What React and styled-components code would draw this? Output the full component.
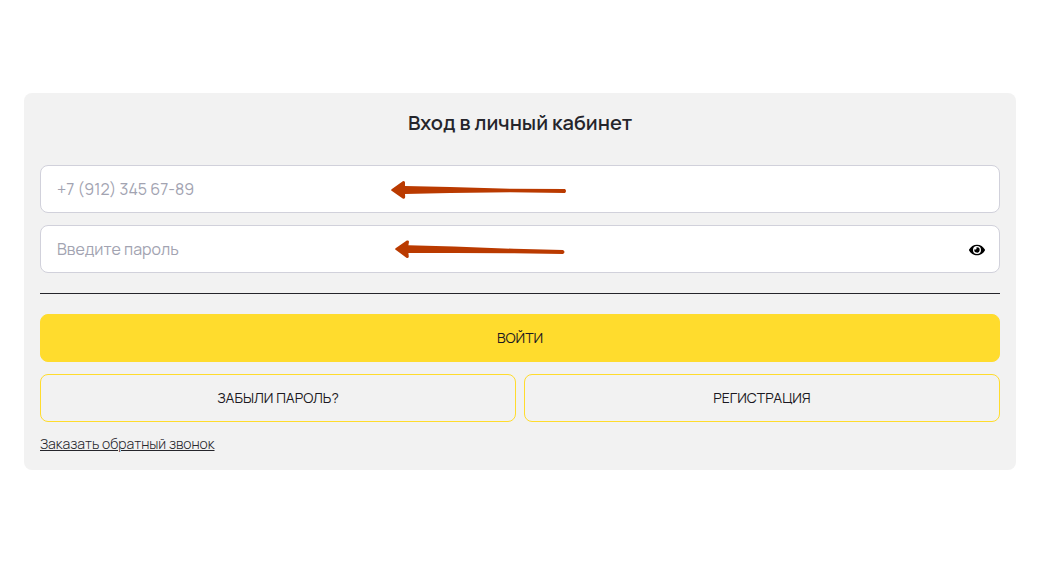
import React, { useState } from "react";
import styled, { createGlobalStyle } from "styled-components";
import { FaEye } from "react-icons/fa";

const GlobalStyle = createGlobalStyle`
  *, *::before, *::after { box-sizing: border-box; }
  body {
    margin: 0;
    background: #fff;
    color: #25252b;
    font-family: Manrope, Inter, "Open Sans", sans-serif;
  }
`;

const Page = styled.main`
  padding: 93px 25px 24px 24px;
`;

const Panel = styled.form`
  padding: 16px;
  border-radius: 8px;
  background: #f2f2f2;
`;

const Title = styled.h1`
  margin: 0 0 28px;
  font-size: 20px;
  line-height: 28px;
  font-weight: 600;
  text-align: center;
`;

const Fields = styled.div`
  display: flex;
  flex-direction: column;
  gap: 12px;
`;

const Field = styled.div`
  position: relative;
  display: flex;
  align-items: center;
  height: 48px;
  padding: 0 14px 0 16px;
  border: 1px solid #d1d1db;
  border-radius: 8px;
  background: #fff;
`;

const Input = styled.input`
  flex: 1;
  min-width: 0;
  height: 100%;
  padding: 0;
  border: 0;
  outline: 0;
  background: transparent;
  color: inherit;
  font: inherit;
  font-size: 16px;
  &::placeholder { color: #a2a3b1; opacity: 1; }
`;

const EyeButton = styled.button`
  display: flex;
  padding: 2px 0 0;
  border: 0;
  background: transparent;
  color: #000;
  cursor: pointer;
`;

const Arrow = styled.svg`
  position: absolute;
  top: 14px;
  left: ${(p) => p.$left}px;
  pointer-events: none;
`;

const Divider = styled.hr`
  height: 1px;
  margin: 20px 0;
  border: 0;
  background: #25252b;
`;

const Button = styled.button`
  width: 100%;
  height: 48px;
  padding: 0 16px 2px;
  border: 1px solid #ffdc2d;
  border-radius: 8px;
  background: ${(p) => (p.$filled ? "#ffdc2d" : "transparent")};
  color: #1b1922;
  font: inherit;
  font-size: 14px;
  text-transform: uppercase;
  cursor: pointer;
`;

const Actions = styled.div`
  display: grid;
  grid-template-columns: 1fr 1fr;
  gap: 8px;
  margin: 12px 0;
`;

const Callback = styled.a`
  display: table;
  color: #25252b;
  font-size: 14px;
  font-weight: 300;
  line-height: 20px;
  text-decoration: underline;
`;

export default function App() {
  const [shown, setShown] = useState(false);
  return (
    <>
      <GlobalStyle />
      <Page>
        <Panel onSubmit={(e) => e.preventDefault()}>
          <Title>Вход в личный кабинет</Title>
          <Fields>
            <Field>
              <Input type="tel" aria-label="Телефон" placeholder="+7 (912) 345 67-89" />
              <Arrow $left={349} width="177" height="20" viewBox="0 0 177 20" aria-hidden="true">
                <path
                  d="M1.6 9.2 L12.8 1.2 Q14.8 .4 15 2.5 L15 6 L60 7 L120 8.7 L175 9.1 Q177 11 175 12.9 L120 12.3 L60 13 L15 14 L15.2 17 Q15 19.6 12.7 18.4 L1.6 10.8 Q.6 10 1.6 9.2Z"
                  fill="#ba3a00"
                />
              </Arrow>
            </Field>
            <Field>
              <Input
                type={shown ? "text" : "password"}
                aria-label="Пароль"
                placeholder="Введите пароль"
              />
              <Arrow $left={353} width="173" height="20" viewBox="0 0 173 20" aria-hidden="true">
                <path
                  d="M1.6 8.2 L12.8 .6 Q14.8 0 15 1.8 L14.4 5.2 L60 6.6 L120 8.8 L169 10.1 Q172 12 169 13.9 L120 13.3 L60 13.1 L14.4 13.1 L14.8 16.4 Q14.4 18.7 12.4 17.7 L1.6 9.8 Q.6 9 1.6 8.2Z"
                  fill="#ba3a00"
                />
              </Arrow>
              <EyeButton type="button" aria-label="Показать пароль" onClick={() => setShown(!shown)}>
                <FaEye size={16} />
              </EyeButton>
            </Field>
          </Fields>
          <Divider />
          <Button type="submit" $filled>Войти</Button>
          <Actions>
            <Button type="button">Забыли пароль?</Button>
            <Button type="button">Регистрация</Button>
          </Actions>
          <Callback href="#callback">Заказать обратный звонок</Callback>
        </Panel>
      </Page>
    </>
  );
}
